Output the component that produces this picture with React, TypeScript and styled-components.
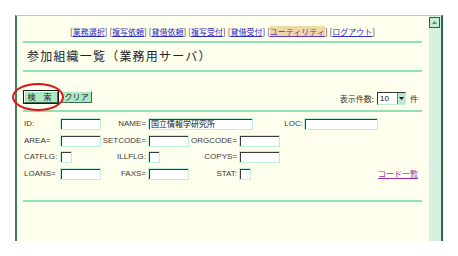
import React from "react";
import styled, { createGlobalStyle } from "styled-components";

const Global = createGlobalStyle`
  html, body { margin: 0; padding: 0; background: #ffffff; }
  body { font-family: "Liberation Sans", "Noto Sans CJK JP", sans-serif; }
  * { box-sizing: border-box; }
`;

const Page = styled.div`
  position: relative;
  width: 458px;
  height: 256px;
  padding: 15px;
`;

const Frame = styled.div`
  display: flex;
  width: 428px;
  height: 226px;
  background: #ffffee;
  border-top: 1px solid #a8dcb8;
  border-left: 2px solid #3f7d5c;
  border-right: 2px solid #2b6b4a;
`;

const Main = styled.div`
  flex: 1;
  display: flex;
  flex-direction: column;
  padding: 10px 7px 0 6px;
`;

const Scrollbar = styled.div`
  width: 12px;
  background: #d6f1e2;
  display: flex;
  flex-direction: column;
  padding-top: 1px;
`;

const ScrollButton = styled.div`
  width: 11px;
  height: 11px;
  border: 1px solid #2d5e44;
  background: #c4ebd5;
  display: flex;
  align-items: center;
  justify-content: center;
`;

const Nav = styled.div`
  height: 12px;
  line-height: 12px;
  text-align: center;
  font-family: "Noto Sans CJK JP", sans-serif;
  font-size: 8px;
  color: #333;
  white-space: nowrap;
`;

const NavItem = styled.span`
  margin: 0 1px;
`;

const NavLink = styled.a<{ $active?: boolean }>`
  color: ${(p) => (p.$active ? "#6a35b0" : "#2c2cc8")};
  background: ${(p) => (p.$active ? "#efd8a8" : "transparent")};
  text-decoration: underline;
`;

const Rule = styled.div<{ $top: number }>`
  height: 2px;
  margin-top: ${(p) => p.$top}px;
  background: #90e1b5;
`;

const Title = styled.h1`
  margin: 5px 0 0 4px;
  font-family: "Noto Sans CJK JP", sans-serif;
  font-weight: normal;
  font-size: 12px;
  line-height: 16px;
  color: #222;
  letter-spacing: 1.2px;
`;

const ControlRow = styled.div`
  margin-top: 19px;
  height: 14px;
  display: flex;
  align-items: flex-start;
  padding: 0 4px 0 1px;
`;

const Button = styled.button<{ $default?: boolean }>`
  height: 12px;
  padding: 0;
  margin-right: 3px;
  font-family: "Noto Sans CJK JP", sans-serif;
  font-size: 8px;
  line-height: 10px;
  color: #222;
  background: #ade8c4;
  border: 1px solid;
  border-color: #eafff2 #3d6b52 #3d6b52 #eafff2;
  outline: ${(p) => (p.$default ? "1px solid #1a1a1a" : "none")};
  outline-offset: 0;
  letter-spacing: ${(p) => (p.$default ? "3px" : "0")};
`;

const Spacer = styled.div`
  flex: 1;
`;

const CountLabel = styled.span`
  margin-top: 2px;
  font-family: "Noto Sans CJK JP", sans-serif;
  font-size: 8px;
  line-height: 12px;
  color: #333;
`;

const SelectBox = styled.div`
  margin: 1px 4px 0 3px;
  width: 29px;
  height: 13px;
  display: flex;
  background: #fff;
  border: 1px solid;
  border-color: #333 #bfeed6 #bfeed6 #333;
`;

const SelectText = styled.span`
  flex: 1;
  font-family: "Liberation Sans", sans-serif;
  font-size: 8px;
  line-height: 11px;
  padding-left: 2px;
  color: #111;
`;

const SelectArrow = styled.span`
  width: 8px;
  background: #b9e9cd;
  border-left: 1px solid #5f8f75;
  display: flex;
  align-items: center;
  justify-content: center;
`;

const FormGrid = styled.div`
  margin-top: 4px;
  display: grid;
  grid-template-columns: 37px 41px 47px 42px 49px 42px 23px 76px 1fr;
  grid-auto-rows: 16.5px;
  align-items: center;
  font-family: "Liberation Sans", sans-serif;
  font-size: 8px;
  color: #3a3a3a;
`;

const Label = styled.span<{ $align?: "left" | "right"; $col: number }>`
  grid-column: ${(p) => p.$col};
  text-align: ${(p) => p.$align ?? "left"};
  padding-left: ${(p) => (p.$align === "right" ? 0 : 1)}px;
  padding-right: ${(p) => (p.$align === "right" ? 2 : 0)}px;
  white-space: nowrap;
  line-height: 10px;
`;

const Field = styled.div<{ $col: number; $span?: number; $w: number }>`
  grid-column: ${(p) => p.$col} / span ${(p) => p.$span ?? 1};
  width: ${(p) => p.$w}px;
  height: 12px;
  background: #fff;
  border: 1px solid #bfeed6;
  box-shadow: inset 1px 1px 0 #3a3a3a;
  font-family: "Noto Sans CJK JP", sans-serif;
  font-size: 8px;
  line-height: 10px;
  padding-left: 2px;
  color: #111;
  white-space: nowrap;
  overflow: hidden;
`;

const CodeLink = styled.a`
  grid-column: 8 / span 2;
  justify-self: end;
  margin-right: 4px;
  font-family: "Noto Sans CJK JP", sans-serif;
  font-size: 8px;
  line-height: 10px;
  color: #9a2fa8;
  text-decoration: underline;
`;

const Ellipse = styled.div`
  position: absolute;
  left: 12px;
  top: 83px;
  width: 52px;
  height: 28px;
  border: 2px solid #e01515;
  border-radius: 50%;
  pointer-events: none;
`;

const navItems = [
  "業務選択",
  "複写依頼",
  "貸借依頼",
  "複写受付",
  "貸借受付",
  "ユーティリティ",
  "ログアウト",
];

export default function App() {
  return (
    <>
      <Global />
      <Page>
        <Frame>
          <Main>
            <Nav>
              {navItems.map((n) => (
                <NavItem key={n}>
                  [<NavLink $active={n === "ユーティリティ"}>{n}</NavLink>]
                </NavItem>
              ))}
            </Nav>
            <Rule $top={3} />
            <Title>参加組織一覧（業務用サーバ）</Title>
            <Rule $top={6} />
            <ControlRow>
              <Button $default style={{ width: 34 }}>検 索</Button>
              <Button style={{ width: 31 }}>クリア</Button>
              <Spacer />
              <CountLabel>表示件数:</CountLabel>
              <SelectBox>
                <SelectText>10</SelectText>
                <SelectArrow>
                  <svg width="5" height="3" viewBox="0 0 5 3">
                    <polygon points="0,0 5,0 2.5,3" fill="#111" />
                  </svg>
                </SelectArrow>
              </SelectBox>
              <CountLabel>件</CountLabel>
            </ControlRow>
            <Rule $top={5} />
            <FormGrid>
              <Label $col={1}>ID:</Label>
              <Field $col={2} $w={41} />
              <Label $col={3} $align="right">NAME=</Label>
              <Field $col={4} $span={3} $w={105}>国立情報学研究所</Field>
              <Label $col={7}>&nbsp;LOC:</Label>
              <Field $col={8} $w={74} />

              <Label $col={1}>AREA=</Label>
              <Field $col={2} $w={41} />
              <Label $col={3} $align="right">SETCODE=</Label>
              <Field $col={4} $w={41} />
              <Label $col={5} $align="right">ORGCODE=</Label>
              <Field $col={6} $w={41} />

              <Label $col={1}>CATFLG:</Label>
              <Field $col={2} $w={12} />
              <Label $col={3} $align="right">ILLFLG:</Label>
              <Field $col={4} $w={12} />
              <Label $col={5} $align="right">COPYS=</Label>
              <Field $col={6} $w={41} />

              <Label $col={1}>LOANS=</Label>
              <Field $col={2} $w={41} />
              <Label $col={3} $align="right">FAXS=</Label>
              <Field $col={4} $w={41} />
              <Label $col={5} $align="right">STAT:</Label>
              <Field $col={6} $w={12} />
              <CodeLink>コード一覧</CodeLink>
            </FormGrid>
            <Rule $top={18} />
          </Main>
          <Scrollbar>
            <ScrollButton>
              <svg width="5" height="3" viewBox="0 0 5 3">
                <polygon points="2.5,0 5,3 0,3" fill="#3f9a68" />
              </svg>
            </ScrollButton>
          </Scrollbar>
        </Frame>
        <Ellipse />
      </Page>
    </>
  );
}
